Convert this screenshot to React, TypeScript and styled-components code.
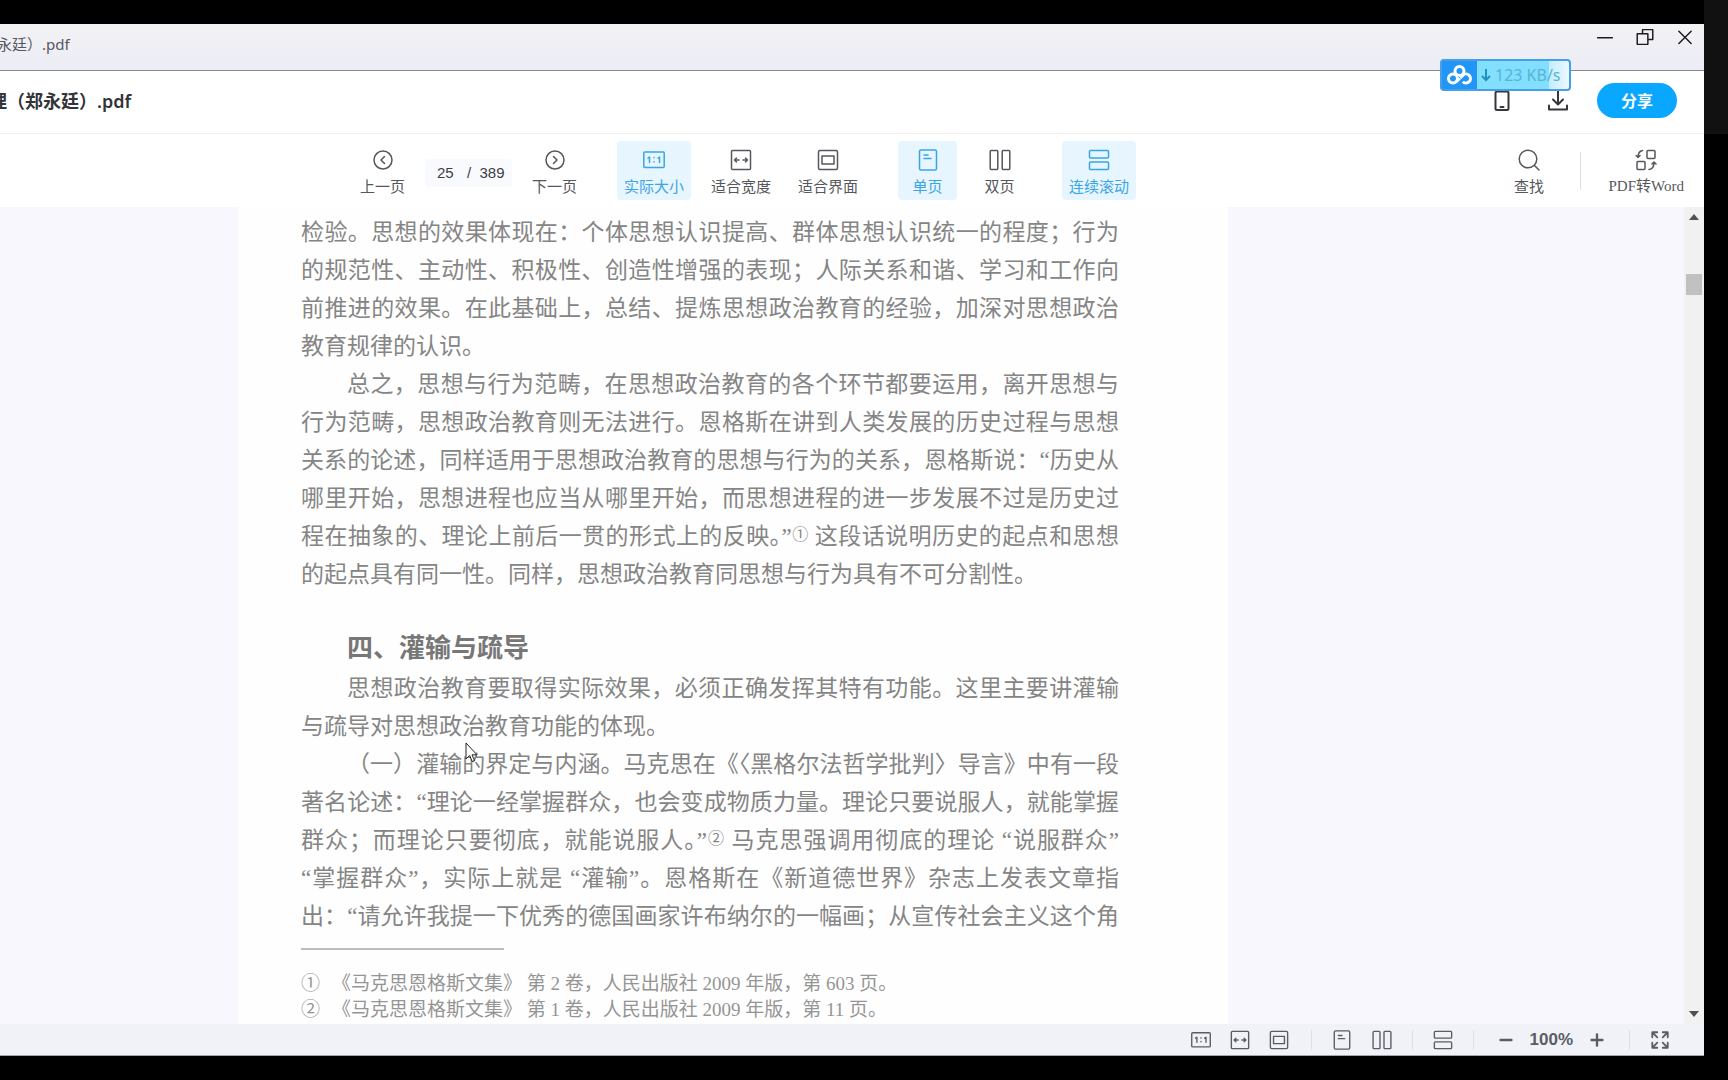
import React from "react";
import styled, { createGlobalStyle, css } from "styled-components";

const UI_FONT = `"Noto Sans", "Noto Sans CJK SC", sans-serif`;
const CJK_FONT = `"Noto Sans CJK SC", sans-serif`;
const BOOK_FONT = `"Liberation Serif", "Noto Sans CJK SC", serif`;

const GlobalStyle = createGlobalStyle`
  * { box-sizing: border-box; }
  body { margin: 0; background: #000; font-family: ${UI_FONT}; }
  button, input { font: inherit; color: inherit; border: 0; padding: 0; margin: 0; background: none; }
  button { cursor: pointer; }
`;

const Screen = styled.div`
  display: grid;
  grid-template-columns: minmax(0, 1fr) 24px;
  height: 100vh;
  background: #000;
`;

const Edge = styled.div`
  height: 134px;
  background: #111;
`;

const Window = styled.div`
  display: flex;
  flex-direction: column;
  min-height: 0;
  margin: 24px 0;
  background: #fff;
  overflow: hidden;
`;

const TitleBar = styled.header`
  position: relative;
  display: flex;
  justify-content: space-between;
  height: 47px;
  flex: none;
  background: linear-gradient(#f2f2f4, #ecedf6);
  border-bottom: 1px solid #868794;
`;

const WindowTitle = styled.div`
  margin-left: -3px;
  line-height: 41px;
  font-size: 15px;
  color: #55575f;
  white-space: nowrap;
`;

const WindowControls = styled.div`
  display: flex;
  gap: 22px;
  height: 26px;
  padding-right: 10px;
  align-items: center;
`;

const ControlButton = styled.button`
  display: grid;
  place-items: center;
  width: 18px;
  height: 18px;
  color: #1c1c1f;
`;

const SpeedBadge = styled.div`
  position: absolute;
  top: 35px;
  right: 133px;
  z-index: 2;
  display: flex;
  width: 131px;
  height: 32px;
  border: 2px solid #479fe6;
  border-radius: 4px;
  background: #2196f8;
  overflow: hidden;
`;

const BadgeLogo = styled.span`
  display: grid;
  place-items: center;
  width: 35px;
  color: #fff;
`;

const BadgeRate = styled.span`
  flex: 1;
  display: flex;
  align-items: center;
  gap: 4px;
  padding-left: 4px;
  font-size: 16px;
  color: #57b4d6;
  white-space: nowrap;
  background: linear-gradient(90deg, #82dfff 0 72px, #c4edff 72px, #edf9ff);
`;

const FileBar = styled.div`
  display: flex;
  align-items: center;
  justify-content: space-between;
  height: 63px;
  flex: none;
  padding: 0 27px 3px 0;
  border-bottom: 1px solid #f0f0f3;
`;

const FileName = styled.h1`
  margin: 0 0 0 -11px;
  font-size: 18px;
  font-weight: 600;
  line-height: 26px;
  color: #333438;
  white-space: nowrap;
`;

const FileActions = styled.div`
  display: flex;
  align-items: center;
  gap: 28px;
`;

const FileIcons = styled.div`
  display: flex;
  gap: 34px;
`;

const PlainIconButton = styled.button`
  display: grid;
  place-items: center;
  width: 22px;
  height: 22px;
  color: #34363b;
`;

const ShareButton = styled.button`
  width: 80px;
  height: 35px;
  border-radius: 18px;
  background: #09a7ff;
  color: #fff;
  font-family: ${CJK_FONT};
  font-size: 16px;
  font-weight: 700;
  line-height: 35px;
`;

const Toolbar = styled.nav`
  display: flex;
  align-items: center;
  justify-content: space-between;
  height: 73px;
  flex: none;
  padding: 0 13px 0 353px;
`;

const ToolGroups = styled.div`
  display: flex;
  align-items: center;
  gap: 33px;
`;

const ToolGroup = styled.div<{ $gap?: number }>`
  display: flex;
  align-items: center;
  gap: ${(p) => p.$gap ?? 13}px;
`;

const ToolButton = styled.button<{ $active?: boolean; $serif?: boolean }>`
  display: flex;
  flex-direction: column;
  align-items: center;
  gap: 5px;
  min-width: 59px;
  height: 59px;
  padding: 8px 7px 0;
  border-radius: 4px;
  font-family: ${(p) => (p.$serif ? BOOK_FONT : CJK_FONT)};
  font-size: 15px;
  line-height: 20px;
  white-space: nowrap;
  color: #55575d;
  ${(p) =>
    p.$active &&
    css`
      background: #e6f5fe;
      color: #3aa5e6;
    `}
`;

const PageBox = styled.label`
  display: flex;
  align-items: center;
  width: 87px;
  height: 28px;
  margin-top: 4px;
  padding-left: 12px;
  border-radius: 4px;
  background: #f8fafe;
  font-family: "Liberation Sans", sans-serif;
  font-size: 15px;
  color: #3f4045;
  white-space: pre;
`;

const PageInput = styled.input`
  width: 30px;
`;

const Separator = styled.span<{ $height: number }>`
  flex: none;
  width: 1px;
  height: ${(p) => p.$height}px;
  background: #dfe0e6;
`;

const Viewer = styled.main`
  flex: 1;
  display: flex;
  justify-content: space-between;
  min-height: 0;
  background: #f7f7fd;
`;

const Sheet = styled.article`
  position: relative;
  width: 990px;
  margin-left: 238px;
  padding: 7px 109px 0 63px;
  background: #fefefe;
  overflow: hidden;
  font-family: ${BOOK_FONT};
  font-size: 23px;
  line-height: 38px;
  color: #858585;
`;

const Paragraph = styled.p`
  margin: 0;
`;

const Line = styled.span<{ $indent?: boolean; $last?: boolean }>`
  display: block;
  height: 38px;
  padding-left: ${(p) => (p.$indent ? 46 : 0)}px;
  white-space: nowrap;
  text-align: justify;
  text-align-last: ${(p) => (p.$last ? "left" : "justify")};
`;

const NoteMark = styled.sup`
  font-family: ${CJK_FONT};
  font-size: 16px;
  line-height: 1;
  vertical-align: 4px;
`;

const SectionTitle = styled.h2`
  margin: 36px 0 2px 46px;
  font-size: 26px;
  font-weight: 700;
  line-height: 38px;
  color: #777;
`;

const NoteRule = styled.hr`
  width: 203px;
  height: 2px;
  margin: 12px 0 21px;
  border: 0;
  background: #bdbdbd;
`;

const NoteList = styled.div`
  font-size: 19px;
  line-height: 26px;
  color: #959595;
`;

const Note = styled.div`
  display: flex;
  gap: 12px;
  white-space: nowrap;
`;

const Pointer = styled.svg`
  position: absolute;
  left: 227px;
  top: 535px;
  width: 13px;
  height: 21px;
`;

const ScrollTrack = styled.div`
  display: flex;
  flex-direction: column;
  align-items: center;
  width: 20px;
  padding: 7px 0;
  background: #f1f1f2;
  color: #505050;
`;

const ScrollThumb = styled.div`
  width: 16px;
  height: 21px;
  margin: 54px 0 auto;
  background: #c1c1c1;
`;

const StatusBar = styled.footer`
  display: flex;
  align-items: center;
  justify-content: flex-end;
  gap: 20px;
  height: 32px;
  flex: none;
  padding-right: 34px;
  background: #f1f2f8;
  border-bottom: 1px solid #a3a4ac;
  color: #5a5c66;
`;

const StatusGroup = styled.div<{ $gap: number }>`
  display: flex;
  align-items: center;
  gap: ${(p) => p.$gap}px;
  padding: 0 2px 0 0;
`;

const ZoomGroup = styled(StatusGroup)`
  padding: 0 2px;
`;

const StatusButton = styled.button`
  display: grid;
  place-items: center;
  width: 20px;
  height: 22px;
`;

const ZoomValue = styled.output`
  font-family: "Liberation Sans", sans-serif;
  font-size: 17px;
  font-weight: 700;
  line-height: 22px;
`;

type GlyphProps = { size?: number; stroke?: number; children: React.ReactNode };

function Glyph({ size = 22, stroke = 1.5, children }: GlyphProps) {
  return (
    <svg
      width={size}
      height={size}
      viewBox="0 0 22 22"
      fill="none"
      stroke="currentColor"
      strokeWidth={stroke}
      strokeLinecap="round"
      strokeLinejoin="round"
      aria-hidden="true"
    >
      {children}
    </svg>
  );
}

const PrevIcon = () => (
  <Glyph>
    <circle cx="11" cy="11" r="9" />
    <path d="M12.5 7.5 9 11l3.500 3.500" />
  </Glyph>
);
const NextIcon = () => (
  <Glyph>
    <circle cx="11" cy="11" r="9" />
    <path d="M9.500 7.500 13 11l-3.500 3.500" />
  </Glyph>
);
const ActualIcon = ({ size }: { size?: number }) => (
  <Glyph size={size}>
    <rect x="0.800" y="3" width="20.400" height="15.500" rx="1" />
    <path d="M5 9l1.500-1v5.500M15 9l1.500-1v5.500M11 8.500v.3M11 12.700v.3" />
  </Glyph>
);
const FitWidthIcon = ({ size }: { size?: number }) => (
  <Glyph size={size}>
    <rect x="1.500" y="1.500" width="19" height="19" rx="1" />
    <path d="M4.500 11h4.500M13 11h4.500M6.500 9l-2 2 2 2M15.500 9l2 2-2 2" />
  </Glyph>
);
const FitPageIcon = ({ size }: { size?: number }) => (
  <Glyph size={size}>
    <rect x="1.500" y="1.500" width="19" height="19" rx="1.500" />
    <rect x="5" y="7" width="12" height="8" />
  </Glyph>
);
const SingleIcon = ({ size }: { size?: number }) => (
  <Glyph size={size}>
    <rect x="2.500" y="1" width="17" height="20" rx="1.500" />
    <path d="M7 6h4M7 9.500h7" />
  </Glyph>
);
const DoubleIcon = ({ size }: { size?: number }) => (
  <Glyph size={size}>
    <rect x="1.200" y="1.500" width="7.600" height="19" rx="1" />
    <rect x="13.200" y="1.500" width="7.600" height="19" rx="1" />
  </Glyph>
);
const ScrollIcon = ({ size }: { size?: number }) => (
  <Glyph size={size}>
    <rect x="1.500" y="1.500" width="19" height="7.500" rx="1" />
    <rect x="1.500" y="13" width="19" height="7.500" rx="1" />
  </Glyph>
);
const SearchIcon = () => (
  <Glyph>
    <circle cx="10" cy="10" r="8.800" />
    <path d="M16.500 16.500 21 21" />
  </Glyph>
);
const ConvertIcon = () => (
  <Glyph>
    <rect x="12" y="1.500" width="8" height="8" rx="1" />
    <rect x="2" y="12.500" width="8" height="8" rx="1" />
    <path d="M7.500 1.500C4.500 2 3 4 3 8.500M1.200 6.500 3 8.500l2-2M14 20.500c3.500-.4 5-2.500 5-7M17 15l2-2 2 2" />
  </Glyph>
);
const PhoneIcon = () => (
  <Glyph stroke={2}>
    <rect x="4.500" y="1.500" width="13" height="18.500" rx="1.500" />
    <path d="M9.500 17h3" />
  </Glyph>
);
const DownloadIcon = () => (
  <Glyph stroke={2}>
    <path d="M11 1.500v12M6 9.500l5 5 5-5M2 15.500v4h18v-4" />
  </Glyph>
);
const MinimizeIcon = () => (
  <Glyph size={18}>
    <path d="M2 12h18" strokeWidth="1.800" />
  </Glyph>
);
const RestoreIcon = () => (
  <Glyph size={18} stroke={1.800}>
    <path d="M1.500 7h13v13h-13zM8 7V2h12.500v12h-6" />
  </Glyph>
);
const CloseIcon = () => (
  <Glyph size={18} stroke={1.800}>
    <path d="M3.500 4 18.500 19M18.500 4 3.500 19" />
  </Glyph>
);
const MinusIcon = () => (
  <Glyph size={20} stroke={2.600}>
    <path d="M5 11h12" />
  </Glyph>
);
const PlusIcon = () => (
  <Glyph size={20} stroke={2.600}>
    <path d="M5 11h12M11 5v12" />
  </Glyph>
);
const FullscreenIcon = () => (
  <Glyph size={20} stroke={2}>
    <path d="M2.500 8V2.500H8M3 3l5 5M14 2.500h5.500V8M19 3l-5 5M2.500 14v5.500H8M3 19l5-5M14 19.500h5.500V14M19 19l-5-5" />
  </Glyph>
);
const CloudLogo = () => (
  <svg width="25" height="20" viewBox="0 0 25 20" fill="none" stroke="currentColor" strokeWidth="3" aria-hidden="true">
    <circle cx="12.500" cy="6" r="4.500" />
    <circle cx="6" cy="13.500" r="4.500" />
    <path d="M9.200 16.700 15.800 10.300A4.500 4.500 0 1 1 15.800 16.700" />
    <path d="M11.500 11.500 13.500 13.500" stroke="#2196f8" strokeWidth="1" />
  </svg>
);
const DownArrow = () => (
  <svg width="10" height="14" viewBox="0 0 10 14" fill="none" stroke="#1e93c6" strokeWidth="2" aria-hidden="true">
    <path d="M5 1v11M1 8l4 4 4-4" />
  </svg>
);

export default function App() {
  return (
    <>
      <GlobalStyle />
      <Screen>
        <Window>
          <TitleBar>
            <WindowTitle>永廷）.pdf</WindowTitle>
            <WindowControls>
              <ControlButton aria-label="最小化"><MinimizeIcon /></ControlButton>
              <ControlButton aria-label="还原"><RestoreIcon /></ControlButton>
              <ControlButton aria-label="关闭"><CloseIcon /></ControlButton>
            </WindowControls>
            <SpeedBadge>
              <BadgeLogo><CloudLogo /></BadgeLogo>
              <BadgeRate><DownArrow />123 KB/s</BadgeRate>
            </SpeedBadge>
          </TitleBar>

          <FileBar>
            <FileName>理（郑永廷）.pdf</FileName>
            <FileActions>
              <FileIcons>
                <PlainIconButton aria-label="手机查看"><PhoneIcon /></PlainIconButton>
                <PlainIconButton aria-label="下载"><DownloadIcon /></PlainIconButton>
              </FileIcons>
              <ShareButton>分享</ShareButton>
            </FileActions>
          </FileBar>

          <Toolbar>
            <ToolGroups>
              <ToolGroup>
                <ToolButton><PrevIcon />上一页</ToolButton>
                <PageBox>
                  <PageInput defaultValue="25" aria-label="页码" />/  389
                </PageBox>
                <ToolButton><NextIcon />下一页</ToolButton>
              </ToolGroup>
              <ToolGroup>
                <ToolButton $active><ActualIcon />实际大小</ToolButton>
                <ToolButton><FitWidthIcon />适合宽度</ToolButton>
                <ToolButton><FitPageIcon />适合界面</ToolButton>
              </ToolGroup>
              <ToolGroup>
                <ToolButton $active><SingleIcon />单页</ToolButton>
                <ToolButton><DoubleIcon />双页</ToolButton>
              </ToolGroup>
              <ToolButton $active><ScrollIcon />连续滚动</ToolButton>
            </ToolGroups>
            <ToolGroup $gap={21}>
              <ToolButton><SearchIcon />查找</ToolButton>
              <Separator $height={38} />
              <ToolButton $serif><ConvertIcon />PDF转Word</ToolButton>
            </ToolGroup>
          </Toolbar>

          <Viewer>
            <Sheet lang="zh-CN">
              <Paragraph>
                <Line>检验。思想的效果体现在：个体思想认识提高、群体思想认识统一的程度；行为</Line>
                <Line>的规范性、主动性、积极性、创造性增强的表现；人际关系和谐、学习和工作向</Line>
                <Line>前推进的效果。在此基础上，总结、提炼思想政治教育的经验，加深对思想政治</Line>
                <Line $last>教育规律的认识。</Line>
              </Paragraph>
              <Paragraph>
                <Line $indent>总之，思想与行为范畴，在思想政治教育的各个环节都要运用，离开思想与</Line>
                <Line>行为范畴，思想政治教育则无法进行。恩格斯在讲到人类发展的历史过程与思想</Line>
                <Line>关系的论述，同样适用于思想政治教育的思想与行为的关系，恩格斯说：“历史从</Line>
                <Line>哪里开始，思想进程也应当从哪里开始，而思想进程的进一步发展不过是历史过</Line>
                <Line>程在抽象的、理论上前后一贯的形式上的反映。”<NoteMark>①</NoteMark> 这段话说明历史的起点和思想</Line>
                <Line $last>的起点具有同一性。同样，思想政治教育同思想与行为具有不可分割性。</Line>
              </Paragraph>
              <SectionTitle>四、灌输与疏导</SectionTitle>
              <Paragraph>
                <Line $indent>思想政治教育要取得实际效果，必须正确发挥其特有功能。这里主要讲灌输</Line>
                <Line $last>与疏导对思想政治教育功能的体现。</Line>
              </Paragraph>
              <Paragraph>
                <Line $indent>（一）灌输的界定与内涵。马克思在《〈黑格尔法哲学批判〉导言》中有一段</Line>
                <Line>著名论述：“理论一经掌握群众，也会变成物质力量。理论只要说服人，就能掌握</Line>
                <Line>群众；而理论只要彻底，就能说服人。”<NoteMark>②</NoteMark> 马克思强调用彻底的理论 “说服群众”</Line>
                <Line>“掌握群众”，实际上就是 “灌输”。恩格斯在《新道德世界》杂志上发表文章指</Line>
                <Line>出：“请允许我提一下优秀的德国画家许布纳尔的一幅画；从宣传社会主义这个角</Line>
              </Paragraph>
              <NoteRule />
              <NoteList>
                <Note><span>①</span><span>《马克思恩格斯文集》 第 2 卷，人民出版社 2009 年版，第 603 页。</span></Note>
                <Note><span>②</span><span>《马克思恩格斯文集》 第 1 卷，人民出版社 2009 年版，第 11 页。</span></Note>
              </NoteList>
              <Pointer viewBox="0 0 13 21" aria-hidden="true">
                <path d="M1 1v16l3.700-3.500 2.500 6 2.300-1-2.500-5.700h5z" fill="#fff" stroke="#222" strokeWidth="1" />
              </Pointer>
            </Sheet>
            <ScrollTrack>
              <svg width="10" height="6" viewBox="0 0 10 6" aria-hidden="true"><path d="M0 6 5 0l5 6z" fill="currentColor" /></svg>
              <ScrollThumb />
              <svg width="10" height="6" viewBox="0 0 10 6" aria-hidden="true"><path d="M0 0l5 6 5-6z" fill="currentColor" /></svg>
            </ScrollTrack>
          </Viewer>

          <StatusBar>
            <StatusGroup $gap={19}>
              <StatusButton aria-label="实际大小"><ActualIcon size={20} /></StatusButton>
              <StatusButton aria-label="适合宽度"><FitWidthIcon size={20} /></StatusButton>
              <StatusButton aria-label="适合界面"><FitPageIcon size={20} /></StatusButton>
            </StatusGroup>
            <Separator $height={20} />
            <StatusButton aria-label="单页"><SingleIcon size={20} /></StatusButton>
            <StatusButton aria-label="双页"><DoubleIcon size={20} /></StatusButton>
            <Separator $height={20} />
            <StatusButton aria-label="连续滚动"><ScrollIcon size={20} /></StatusButton>
            <Separator $height={20} />
            <ZoomGroup $gap={14}>
              <StatusButton aria-label="缩小"><MinusIcon /></StatusButton>
              <ZoomValue>100%</ZoomValue>
              <StatusButton aria-label="放大"><PlusIcon /></StatusButton>
            </ZoomGroup>
            <Separator $height={20} />
            <StatusButton aria-label="全屏"><FullscreenIcon /></StatusButton>
          </StatusBar>
        </Window>
        <Edge />
      </Screen>
    </>
  );
}
